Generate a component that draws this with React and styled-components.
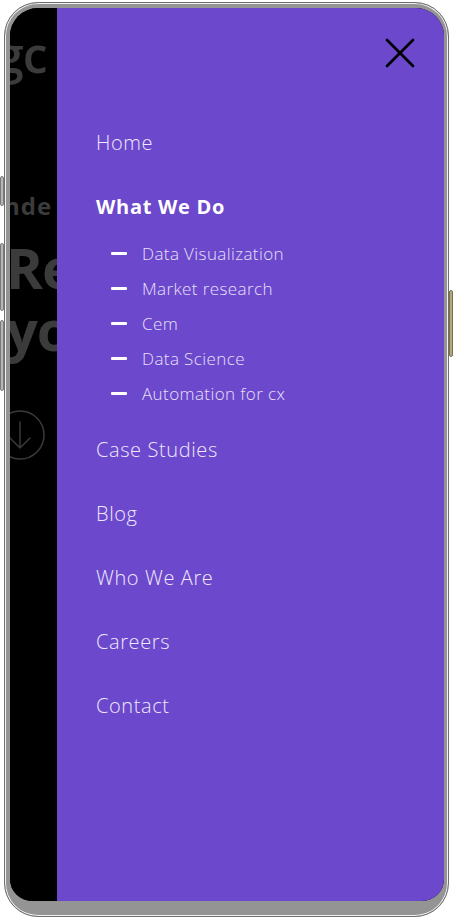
import React from 'react'
import styled, { createGlobalStyle } from 'styled-components'

const GlobalStyle = createGlobalStyle`
  html, body {
    margin: 0;
    padding: 0;
    background: #ffffff;
  }
  body {
    font-family: 'Open Sans', 'Liberation Sans', sans-serif;
  }
`

const Stage = styled.div`
  width: 453px;
  height: 919px;
  position: relative;
  overflow: hidden;
  padding: 2px 4px 2px 4px;
  box-sizing: border-box;
`

const SideKey = styled.span`
  position: absolute;
  top: ${p => p.$top}px;
  height: ${p => p.$height}px;
  width: 4px;
  ${p => (p.$right ? 'right: 0;' : 'left: 0;')}
  border-radius: 2px;
  background: ${p => (p.$right
    ? 'linear-gradient(90deg, #8a8456, #d8d2a0, #8a8456)'
    : 'linear-gradient(90deg, #888, #e2e2e2, #8c8c8c)')};
  border: 1px solid ${p => (p.$right ? '#77714a' : '#7a7a7a')};
  box-sizing: border-box;
`

const Phone = styled.div`
  height: 100%;
  box-sizing: border-box;
  border-radius: 34px;
  background: #949494;
  border: 1px solid #6f6f6f;
  box-shadow: inset 0 0 0 1px #f2f2f2;
  padding: 5px 4px 15px 5px;
`

const Screen = styled.div`
  height: 100%;
  display: flex;
  border-radius: 28px 28px 22px 22px;
  overflow: hidden;
  background: #000;
`

const Backdrop = styled.div`
  width: 47px;
  flex: none;
  overflow: hidden;
  background: #000;
  color: #3b3b3b;
  font-family: 'Open Sans', 'Liberation Sans', sans-serif;
`

const BackdropInner = styled.div`
  margin-left: ${p => p.$shift}px;
  white-space: nowrap;
`

const Logo = styled.div`
  font-size: 50px;
  font-weight: 600;
  line-height: 50px;
  padding-top: 21px;
  letter-spacing: -1px;
`

const Eyebrow = styled.div`
  font-size: 24px;
  font-weight: 700;
  line-height: 28px;
  margin-top: 113px;
  letter-spacing: 1px;
`

const Headline = styled.div`
  font-size: 56px;
  font-weight: 700;
  line-height: 62px;
  margin-top: 16px;
  letter-spacing: -1px;
`

const ScrollCue = styled.div`
  margin-top: 50px;
  margin-left: -15px;
  width: 50px;
  height: 50px;
  color: #3a3a3a;
`

const Panel = styled.nav`
  flex: 1;
  background: #6c48cc;
  display: flex;
  flex-direction: column;
`

const Header = styled.div`
  height: 103px;
  display: flex;
  justify-content: flex-end;
  align-items: flex-start;
  padding: 30px 29px 0 0;
  box-sizing: border-box;
`

const Close = styled.button`
  width: 30px;
  height: 30px;
  padding: 0;
  border: none;
  background: none;
  display: flex;
  align-items: center;
  justify-content: center;
`

const Menu = styled.ul`
  list-style: none;
  margin: 0;
  padding: 0 0 0 39px;
`

const MainLink = styled.li`
  padding: 20px 0;
  line-height: 24px;
  font-size: 20px;
  font-weight: ${p => (p.$active ? 700 : 300)};
  color: ${p => (p.$active ? '#ffffff' : '#efe9fc')};
  letter-spacing: ${p => (p.$active ? '0.7px' : '0.6px')};
`

const SubList = styled.ul`
  list-style: none;
  margin: -3px 0 0;
  padding: 0 0 7px 15px;
`

const SubLink = styled.li`
  display: flex;
  align-items: center;
  height: 35px;
  font-size: 17px;
  font-weight: 300;
  color: #e8e0fa;
  letter-spacing: 0.4px;

  &::before {
    content: '';
    width: 16px;
    height: 3px;
    background: #ffffff;
    margin-right: 15px;
    border-radius: 1px;
  }
`

const services = [
  'Data Visualization',
  'Market research',
  'Cem',
  'Data Science',
  'Automation for cx',
]

const pages = ['Case Studies', 'Blog', 'Who We Are', 'Careers', 'Contact']

export default function App() {
  return <>
    <GlobalStyle />
    <Stage>
      <SideKey $top={176} $height={30} />
      <SideKey $top={243} $height={68} />
      <SideKey $top={320} $height={71} />
      <SideKey $right $top={290} $height={67} />
      <Phone>
        <Screen>
          <Backdrop>
            <BackdropInner $shift={-14}>
              <Logo>gc</Logo>
            </BackdropInner>
            <BackdropInner $shift={-6}>
              <Eyebrow>nde</Eyebrow>
            </BackdropInner>
            <BackdropInner $shift={-4}>
              <Headline>Re<br />yo</Headline>
            </BackdropInner>
            <ScrollCue>
              <svg width='50' height='50' viewBox='0 0 50 50' fill='none' stroke='currentColor' strokeWidth='1.5' strokeLinecap='round'>
                <circle cx='25' cy='25' r='24' />
                <path d='M25 12 V38 M15 28 L25 38 L35 28' />
              </svg>
            </ScrollCue>
          </Backdrop>
          <Panel>
            <Header>
              <Close aria-label='Close menu'>
                <svg width='30' height='30' viewBox='0 0 30 30' stroke='#000' strokeWidth='2.7' strokeLinecap='round'>
                  <path d='M2 2 L28 28 M28 2 L2 28' />
                </svg>
              </Close>
            </Header>
            <Menu>
              <MainLink>Home</MainLink>
              <MainLink $active>What We Do</MainLink>
              <SubList>
                {services.map(s => <SubLink key={s}>{s}</SubLink>)}
              </SubList>
              {pages.map(p => <MainLink key={p}>{p}</MainLink>)}
            </Menu>
          </Panel>
        </Screen>
      </Phone>
    </Stage>
  </>
}
